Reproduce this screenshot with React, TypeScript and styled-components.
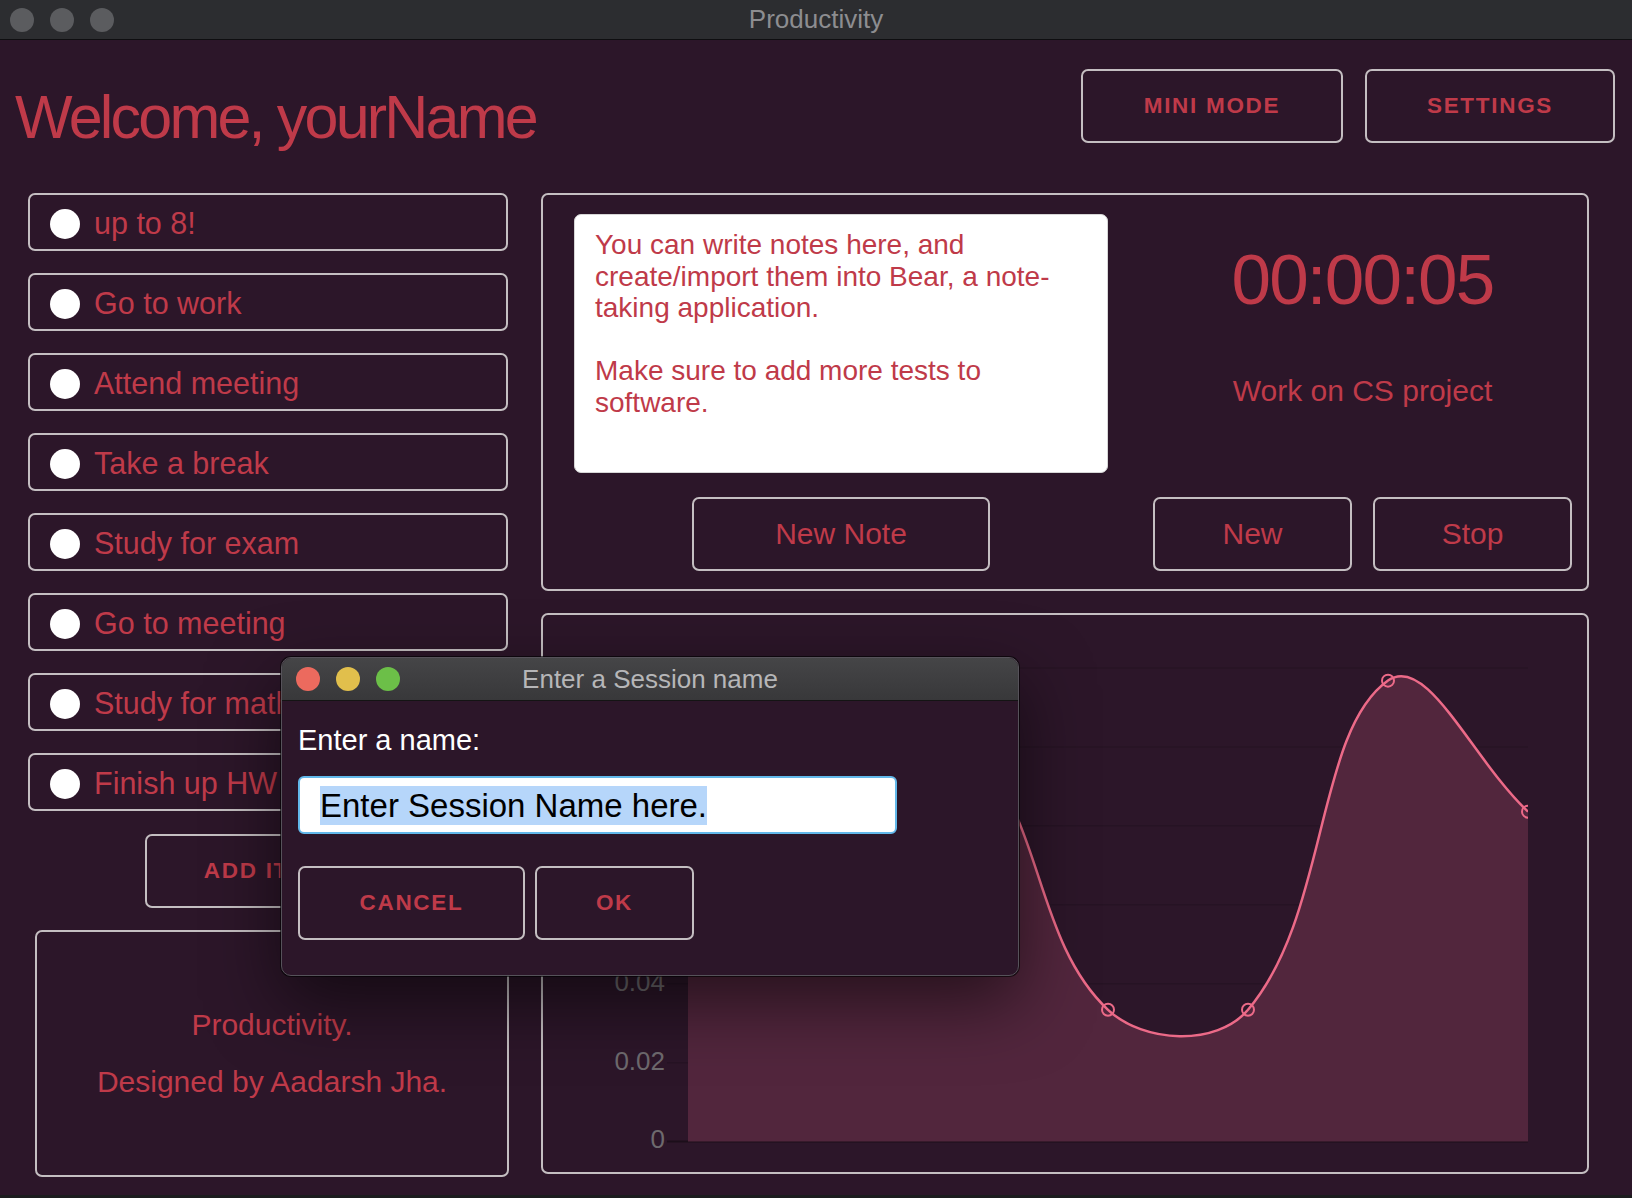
import styled, { createGlobalStyle } from 'styled-components';

const RED = '#bf3a49';
const LINE = '#c4bec1';
const BG = '#2c1629';

const GlobalStyle = createGlobalStyle`
  html, body {
    margin: 0;
    background: ${BG};
  }
  body {
    font-family: "Liberation Sans", Arial, Helvetica, sans-serif;
  }
  * {
    box-sizing: border-box;
  }
`;

const Window = styled.div`
  position: relative;
  width: 1632px;
  height: 1198px;
  overflow: hidden;
  background: ${BG};
  display: flex;
  flex-direction: column;
  border-bottom: 3px solid #1c1c1e;
`;

const TitleBar = styled.div`
  height: 40px;
  flex-shrink: 0;
  background: #2c2d30;
  border-bottom: 1px solid #0e0e10;
  display: grid;
  grid-template-columns: 1fr auto 1fr;
  align-items: center;
`;

const Lights = styled.div<{ $pad: number }>`
  display: flex;
  gap: 16px;
  padding-left: ${(p) => p.$pad}px;
`;

const Light = styled.span<{ $color: string }>`
  width: 24px;
  height: 24px;
  border-radius: 50%;
  background: ${(p) => p.$color};
`;

const WindowTitle = styled.div<{ $color: string }>`
  font-size: 26px;
  color: ${(p) => p.$color};
`;

const Main = styled.main`
  flex: 1;
  padding-top: 29px;
`;

const Header = styled.header`
  display: flex;
  justify-content: space-between;
  align-items: flex-start;
  height: 74px;
  padding: 0 17px 0 15px;
`;

const Welcome = styled.h1`
  margin: 18px 0 0;
  font-size: 61px;
  line-height: 1;
  font-weight: 400;
  letter-spacing: -2.8px;
  color: ${RED};
`;

const HeaderButtons = styled.div`
  display: flex;
  gap: 22px;
`;

const OutlineButton = styled.button<{ $w: number; $caps?: boolean }>`
  width: ${(p) => p.$w}px;
  height: 74px;
  flex-shrink: 0;
  border: 2px solid ${LINE};
  border-radius: 7px;
  background: transparent;
  color: ${RED};
  font-family: "Liberation Sans", Arial, sans-serif;
  font-size: ${(p) => (p.$caps ? '22.5px' : '30px')};
  font-weight: ${(p) => (p.$caps ? 700 : 400)};
  letter-spacing: ${(p) => (p.$caps ? '1.7px' : 'normal')};
  text-transform: ${(p) => (p.$caps ? 'uppercase' : 'none')};
  padding: 0;
  cursor: pointer;
`;

const Content = styled.div`
  display: grid;
  grid-template-columns: 480px 1048px;
  column-gap: 33px;
  align-items: start;
  margin-top: 50px;
  padding-left: 28px;
`;

const LeftColumn = styled.div`
  display: flex;
  flex-direction: column;
`;

const TaskList = styled.div`
  display: flex;
  flex-direction: column;
  gap: 22px;
`;

const TaskRow = styled.div`
  height: 58px;
  border: 2px solid ${LINE};
  border-radius: 7px;
  display: flex;
  align-items: center;
  gap: 14px;
  padding: 3px 0 0 20px;
  font-size: 30.5px;
  color: ${RED};
  white-space: nowrap;
`;

const TaskDot = styled.span`
  width: 30px;
  height: 30px;
  border-radius: 50%;
  background: #fff;
  flex-shrink: 0;
`;

const AddButton = styled(OutlineButton)`
  margin: 23px 0 0 117px;
`;

const Footer = styled.footer`
  margin: 22px 0 0 7px;
  width: 474px;
  height: 247px;
  border: 2px solid ${LINE};
  border-radius: 7px;
  display: flex;
  flex-direction: column;
  align-items: center;
  justify-content: center;
  gap: 27.6px;
  color: ${RED};
  font-size: 30px;
  line-height: 1;
`;

const RightColumn = styled.div`
  display: flex;
  flex-direction: column;
  gap: 22px;
`;

const TimerPanel = styled.section`
  height: 398px;
  border: 2px solid ${LINE};
  border-radius: 7px;
  display: grid;
  grid-template-columns: 534px 1fr;
  grid-template-rows: 259px 74px;
  column-gap: 30px;
  row-gap: 24px;
  padding: 19px 0 18px 31px;
`;

const NotesBox = styled.div`
  background: #fff;
  border: 1px solid #d6d6d6;
  border-radius: 7px;
  padding: 14px 20px;
  font-size: 28px;
  line-height: 31.5px;
  color: ${RED};
  white-space: pre-wrap;
`;

const TimerInfo = styled.div`
  display: flex;
  flex-direction: column;
  align-items: center;
  color: ${RED};
`;

const TimeText = styled.div`
  margin-top: 30px;
  font-size: 71px;
  line-height: 1;
  letter-spacing: -1.8px;
`;

const SessionName = styled.div`
  margin-top: 61px;
  font-size: 30px;
  line-height: 1;
`;

const ButtonRow = styled.div`
  display: flex;
  justify-content: center;
  gap: 21px;
`;

const ChartPanel = styled.section`
  height: 561px;
  border: 2px solid ${LINE};
  border-radius: 7px;
  overflow: hidden;
`;

const Dialog = styled.div`
  position: absolute;
  left: 281px;
  top: 657px;
  width: 738px;
  height: 319px;
  border: 1px solid #56525a;
  border-radius: 10px;
  background: ${BG};
  overflow: hidden;
  box-shadow: 0 26px 70px rgba(0, 0, 0, 0.55), 0 0 0 1px rgba(0, 0, 0, 0.6);
  display: flex;
  flex-direction: column;
`;

const DialogBar = styled.div`
  height: 43px;
  flex-shrink: 0;
  background: linear-gradient(#454547, #38383a);
  border-bottom: 1px solid #141414;
  display: grid;
  grid-template-columns: 1fr auto 1fr;
  align-items: center;
`;

const DialogBody = styled.div`
  padding: 0 16px;
  display: flex;
  flex-direction: column;
  align-items: flex-start;
`;

const DialogLabel = styled.div`
  margin-top: 25px;
  font-size: 29px;
  line-height: 1;
  color: #fff;
`;

const TextField = styled.div`
  margin-top: 21px;
  width: 599px;
  height: 58px;
  border: 2px solid #62b8ea;
  border-radius: 6px;
  background: #fff;
  display: flex;
  align-items: center;
  padding-left: 20px;
`;

const Selected = styled.span`
  background: #b6d6fa;
  color: #000;
  font-size: 33px;
  line-height: 39px;
`;

const DialogActions = styled.div`
  margin-top: 32px;
  display: flex;
  gap: 10px;
`;

const tasks = [
  'up to 8!',
  'Go to work',
  'Attend meeting',
  'Take a break',
  'Study for exam',
  'Go to meeting',
  'Study for math',
  'Finish up HW',
];

const notes =
  'You can write notes here, and create/import them into Bear, a note-taking application.\n\nMake sure to add more tests to software.';

// chart geometry, in the panel's inner coordinates
const PLOT_LEFT = 145;
const STEP = 140;
const ZERO_Y = 526.6;
const PER_UNIT = 3946.7;
const values = [0.07, 0.09, 0.1, 0.0334, 0.0334, 0.1168, 0.0836];
const ticks = [0, 0.02, 0.04, 0.06, 0.08, 0.1, 0.12];
// labels above 0.04 sit under the dialog
const shownLabels = [0, 0.02, 0.04];

type Pt = [number, number];

const splinePath = (pts: Pt[], tension = 0.4) => {
  const cps = pts.map((p, i) => {
    const prev = pts[i - 1] ?? p;
    const next = pts[i + 1] ?? p;
    const d01 = Math.hypot(p[0] - prev[0], p[1] - prev[1]);
    const d12 = Math.hypot(next[0] - p[0], next[1] - p[1]);
    const sum = d01 + d12 || 1;
    const fa = (tension * d01) / sum;
    const fb = (tension * d12) / sum;
    return {
      before: [p[0] - fa * (next[0] - prev[0]), p[1] - fa * (next[1] - prev[1])],
      after: [p[0] + fb * (next[0] - prev[0]), p[1] + fb * (next[1] - prev[1])],
    };
  });
  let d = `M${pts[0][0]},${pts[0][1]}`;
  for (let i = 1; i < pts.length; i++) {
    const c1 = cps[i - 1].after;
    const c2 = cps[i].before;
    d += ` C${c1[0].toFixed(1)},${c1[1].toFixed(1)} ${c2[0].toFixed(1)},${c2[1].toFixed(1)} ${pts[i][0]},${pts[i][1].toFixed(1)}`;
  }
  return d;
};

function SessionChart() {
  const pts: Pt[] = values.map((v, i) => [PLOT_LEFT + i * STEP, ZERO_Y - v * PER_UNIT]);
  const line = splinePath(pts);
  const right = PLOT_LEFT + STEP * (values.length - 1);
  const area = `${line} L${right},${ZERO_Y} L${PLOT_LEFT},${ZERO_Y} Z`;

  return (
    <svg width="1044" height="557" viewBox="0 0 1044 557">
      <defs>
        <clipPath id="plot">
          <rect x={PLOT_LEFT} y={0} width={right - PLOT_LEFT} height={ZERO_Y + 1} />
        </clipPath>
      </defs>
      {ticks.map((t) => {
        const y = ZERO_Y - t * PER_UNIT;
        return (
          <g key={t}>
            <line
              x1={124}
              x2={right}
              y1={y}
              y2={y}
              stroke={t === 0 ? 'rgba(0,0,0,0.35)' : 'rgba(0,0,0,0.12)'}
              strokeWidth={t === 0 ? 2 : 1.5}
            />
            {shownLabels.includes(t) && (
              <text
                x={122}
                y={y}
                textAnchor="end"
                dominantBaseline="middle"
                fill="#6e6a6e"
                fontSize="26"
                fontFamily="Liberation Sans, Arial, sans-serif"
              >
                {t === 0 ? '0' : String(t)}
              </text>
            )}
          </g>
        );
      })}
      <g clipPath="url(#plot)">
        <path d={area} fill="#52263d" />
        <path d={line} fill="none" stroke="#ec6a88" strokeWidth="2.5" />
        {pts.map(([x, y], i) => (
          <circle key={i} cx={x} cy={y} r="6" fill="none" stroke="#ec6a88" strokeWidth="2" />
        ))}
      </g>
    </svg>
  );
}

export default function App() {
  return (
    <>
      <GlobalStyle />
      <Window>
        <TitleBar>
          <Lights $pad={10}>
            <Light $color="#5b5c5f" />
            <Light $color="#5b5c5f" />
            <Light $color="#5b5c5f" />
          </Lights>
          <WindowTitle $color="#8d8d90">Productivity</WindowTitle>
          <span />
        </TitleBar>

        <Main>
          <Header>
            <Welcome>Welcome, yourName</Welcome>
            <HeaderButtons>
              <OutlineButton $w={262} $caps>Mini Mode</OutlineButton>
              <OutlineButton $w={250} $caps>Settings</OutlineButton>
            </HeaderButtons>
          </Header>

          <Content>
            <LeftColumn>
              <TaskList>
                {tasks.map((task) => (
                  <TaskRow key={task}>
                    <TaskDot />
                    {task}
                  </TaskRow>
                ))}
              </TaskList>
              <AddButton $w={240} $caps>Add Item</AddButton>
              <Footer>
                <div>Productivity.</div>
                <div>Designed by Aadarsh Jha.</div>
              </Footer>
            </LeftColumn>

            <RightColumn>
              <TimerPanel>
                <NotesBox>{notes}</NotesBox>
                <TimerInfo>
                  <TimeText>00:00:05</TimeText>
                  <SessionName>Work on CS project</SessionName>
                </TimerInfo>
                <ButtonRow>
                  <OutlineButton $w={298}>New Note</OutlineButton>
                </ButtonRow>
                <ButtonRow>
                  <OutlineButton $w={199}>New</OutlineButton>
                  <OutlineButton $w={199}>Stop</OutlineButton>
                </ButtonRow>
              </TimerPanel>
              <ChartPanel>
                <SessionChart />
              </ChartPanel>
            </RightColumn>
          </Content>
        </Main>

        <Dialog>
          <DialogBar>
            <Lights $pad={14}>
              <Light $color="#ec6a5e" />
              <Light $color="#e1bf4c" />
              <Light $color="#6cbf48" />
            </Lights>
            <WindowTitle $color="#b6b6b8">Enter a Session name</WindowTitle>
            <span />
          </DialogBar>
          <DialogBody>
            <DialogLabel>Enter a name:</DialogLabel>
            <TextField>
              <Selected>Enter Session Name here.</Selected>
            </TextField>
            <DialogActions>
              <OutlineButton $w={227} $caps>Cancel</OutlineButton>
              <OutlineButton $w={159} $caps>OK</OutlineButton>
            </DialogActions>
          </DialogBody>
        </Dialog>
      </Window>
    </>
  );
}
